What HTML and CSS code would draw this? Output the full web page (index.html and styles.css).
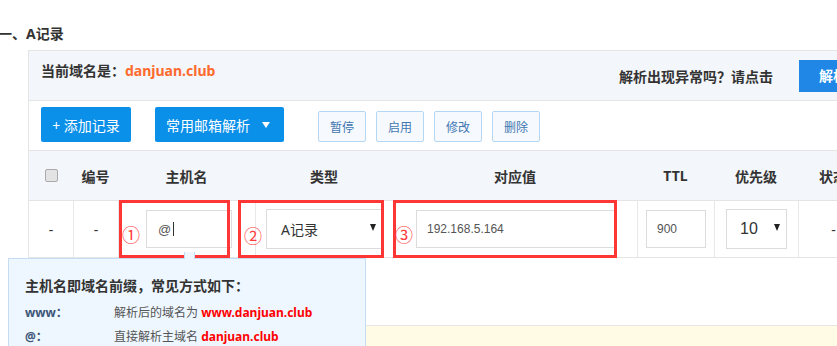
FILE: index.html
```html
<!DOCTYPE html>
<html lang="zh-CN">
<head>
<meta charset="utf-8">
<title>A记录</title>
<link rel="stylesheet" href="styles.css">
</head>
<body>
<h3 class="title">一、A记录</h3>
<div class="panel">
  <div class="panel-head">
    <div class="domain"><span class="cjk">当前域名是：</span><span class="dn">danjuan.club</span></div>
    <div class="help"><span class="help-text cjk">解析出现异常吗？请点击</span><a class="btn-diag">解析诊断</a></div>
  </div>
  <div class="toolbar">
    <button class="btn-primary btn-add">+ 添加记录</button>
    <button class="btn-primary btn-mail">常用邮箱解析<span class="caret-white"></span></button>
    <button class="btn-sm btn-first">暂停</button>
    <button class="btn-sm">启用</button>
    <button class="btn-sm">修改</button>
    <button class="btn-sm">删除</button>
  </div>
  <div class="row thead">
    <div class="cell"><span class="checkbox"></span></div>
    <div class="cell">编号</div>
    <div class="cell">主机名</div>
    <div class="cell">类型</div>
    <div class="cell">对应值</div>
    <div class="cell">TTL</div>
    <div class="cell">优先级</div>
    <div class="cell">状态</div>
    <div class="cell"></div>
  </div>
  <div class="row tbody">
    <div class="cell">-</div>
    <div class="cell sep">-</div>
    <div class="cell sep c-host"><div class="field f-host">@<span class="cursor"></span></div></div>
    <div class="cell sep c-type"><div class="dropdown d-type"><span>A记录</span><span class="caret"></span></div></div>
    <div class="cell sep c-value"><div class="field f-value">192.168.5.164</div></div>
    <div class="cell sep c-ttl"><div class="field f-ttl">900</div></div>
    <div class="cell sep c-prio"><div class="dropdown d-prio"><span>10</span><span class="caret"></span></div></div>
    <div class="cell sep">-</div>
    <div class="cell"></div>

    <div class="mark mark-1"></div>
    <div class="mark mark-2"></div>
    <div class="mark mark-3"></div>
    <span class="num num-1">①</span>
    <span class="num num-2">②</span>
    <span class="num num-3">③</span>

    <div class="tip">
      <span class="tip-arrow"></span>
      <div class="tip-title cjk">主机名即域名前缀，常见方式如下：</div>
      <div class="tip-line"><span class="tip-key">www<span class="cjk">：</span></span><span class="tip-desc">解析后的域名为 <b class="red">www.danjuan.club</b></span></div>
      <div class="tip-line"><span class="tip-key">@<span class="cjk">：</span></span><span class="tip-desc">直接解析主域名 <b class="red">danjuan.club</b></span></div>
    </div>
  </div>
  <div class="notice"></div>
</div>
</body>
</html>
```

FILE: styles.css
```css
* { box-sizing: border-box; }

body {
  margin: 0;
  width: 837px;
  height: 346px;
  overflow: hidden;
  font-family: "Noto Sans", "Noto Sans CJK SC", sans-serif;
  color: #333;
  background: #fff;
}

.cjk { font-family: "Noto Sans CJK SC", sans-serif; }

.title {
  margin: 24px 0 6px -2px;
  font-size: 14px;
  line-height: 20px;
  font-weight: bold;
}

.panel {
  margin-left: 28px;
  width: 882px;
  border: 1px solid #e5e5e5;
  border-bottom: none;
}

/* header */
.panel-head {
  height: 50px;
  background: #f3f6fa;
  border-bottom: 1px solid #e5e5e5;
  display: flex;
  padding: 0 20px 0 12px;
}
.domain {
  padding-top: 9px;
  font-size: 14px;
  line-height: 20px;
  font-weight: bold;
}
.dn { color: #ff6a2c; }
.help {
  margin-left: auto;
  display: flex;
  align-items: center;
}
.help-text {
  font-size: 14px;
  font-weight: bold;
  margin-right: 26px;
}
.btn-diag {
  width: 90px;
  height: 32px;
  background: #2187e7;
  color: #fff;
  font-size: 14px;
  font-weight: bold;
  line-height: 32px;
  padding-left: 20px;
}

/* toolbar */
.toolbar {
  height: 50px;
  border-bottom: 1px solid #e5e5e5;
  display: flex;
  align-items: flex-end;
  padding: 0 0 8px 12px;
  background: #fff;
}
button {
  font-family: inherit;
  margin: 0;
  cursor: pointer;
}
.btn-primary {
  height: 35px;
  border: none;
  border-radius: 2px;
  background: #0b90e9;
  color: #fff;
  font-size: 14px;
  display: flex;
  align-items: center;
  justify-content: center;
  padding: 0;
}
.btn-add { width: 90px; }
.btn-mail {
  width: 129px;
  margin-left: 24px;
  justify-content: flex-start;
  padding-left: 11px;
}
.caret-white {
  margin-left: 12px;
  width: 0;
  height: 0;
  border-left: 4.5px solid transparent;
  border-right: 4.5px solid transparent;
  border-top: 6px solid #fff;
}
.btn-sm {
  width: 48px;
  height: 31px;
  margin-left: 10px;
  border: 1px solid #b4d7f6;
  border-radius: 2px;
  background: #f6faff;
  color: #4277b0;
  font-size: 12px;
  padding: 0;
}
.btn-sm.btn-first { margin-left: 34px; }

/* table */
.row {
  display: grid;
  grid-template-columns: 44px 45px 137px 138px 244px 77px 84px 70px 1fr;
  border-bottom: 1px solid #e5e5e5;
}
.cell {
  display: flex;
  align-items: center;
  justify-content: center;
  font-size: 14px;
}
.thead {
  height: 50px;
  background: #f3f6fa;
}
.thead .cell { font-weight: bold; }
.checkbox {
  width: 13px;
  height: 13px;
  border: 1px solid #aaa;
  border-radius: 2px;
  background: #e3e3e3;
}
.tbody {
  position: relative;
  height: 57px;
  background: #fff;
}
.tbody .sep { border-left: 1px solid #e8e8e8; }

.c-host, .c-type, .c-value, .c-ttl, .c-prio { justify-content: flex-start; }
.c-host { padding-left: 27px; }
.c-type { padding-left: 10px; }
.c-value { padding-left: 22px; }
.c-ttl { padding-left: 8px; }
.c-prio { padding-left: 11px; }

.field {
  height: 38px;
  border: 1px solid #dcdcdc;
  display: flex;
  align-items: center;
  font-family: "Liberation Sans", "Noto Sans CJK SC", sans-serif;
  font-size: 12px;
  color: #555;
  background: #fff;
  padding-left: 11px;
}
.f-host { width: 86px; font-size: 13px; color: #555; }
.cursor {
  display: inline-block;
  width: 1px;
  height: 14px;
  margin-left: 2px;
  background: #333;
}
.f-value { width: 199px; padding-left: 10px; }
.f-ttl { width: 60px; padding-left: 10px; }

.dropdown {
  height: 40px;
  border: 1px solid #dcdcdc;
  display: flex;
  align-items: center;
  justify-content: space-between;
  background: #fff;
  color: #333;
}
.d-type { width: 116px; padding: 0 5px 0 14px; font-size: 14px; }
.d-prio { width: 61px; padding: 0 6px 0 13px; font-size: 16px; font-family: "Liberation Sans", sans-serif; }
.caret {
  width: 0;
  height: 0;
  border-left: 3.5px solid transparent;
  border-right: 3.5px solid transparent;
  border-top: 7px solid #222;
  margin-top: -4px;
}

/* annotations */
.mark {
  position: absolute;
  top: -1px;
  height: 58px;
  border: 3px solid #ff3636;
}
.mark-1 { left: 90px; width: 111px; }
.mark-2 { left: 209px; width: 146px; }
.mark-3 { left: 364px; width: 224px; }
.num {
  position: absolute;
  font-family: "Noto Sans CJK SC", sans-serif;
  font-size: 18px;
  line-height: 18px;
  color: #ff3b3b;
}
.num-1 { left: 93px; top: 24px; }
.num-2 { left: 215px; top: 25px; }
.num-3 { left: 366px; top: 24px; }

/* tooltip */
.tip {
  position: absolute;
  left: -21px;
  top: 57px;
  width: 358px;
  height: 120px;
  background: #eef7ff;
  border: 1px solid #c4ddf4;
  padding: 16px 0 0 16px;
  z-index: 2;
}
.tip-arrow {
  position: absolute;
  left: 175px;
  top: -7px;
  width: 11px;
  height: 7px;
  background: #eef7ff;
  border-left: 1px solid #c4ddf4;
  border-right: 1px solid #c4ddf4;
}
.tip-title {
  font-size: 14px;
  line-height: 20px;
  font-weight: bold;
  margin-bottom: 5px;
}
.tip-line {
  display: flex;
  height: 24px;
  align-items: center;
}
.tip-key {
  width: 89px;
  font-size: 12px;
  font-weight: bold;
  color: #3d5578;
}
.tip-desc {
  font-size: 12px;
  color: #555;
}
.red {
  color: #f00;
  font-size: 12px;
}

.notice {
  margin-top: 67px;
  height: 60px;
  border-top: 1px solid #e5e5e5;
  background: #fffbe5;
}
```
